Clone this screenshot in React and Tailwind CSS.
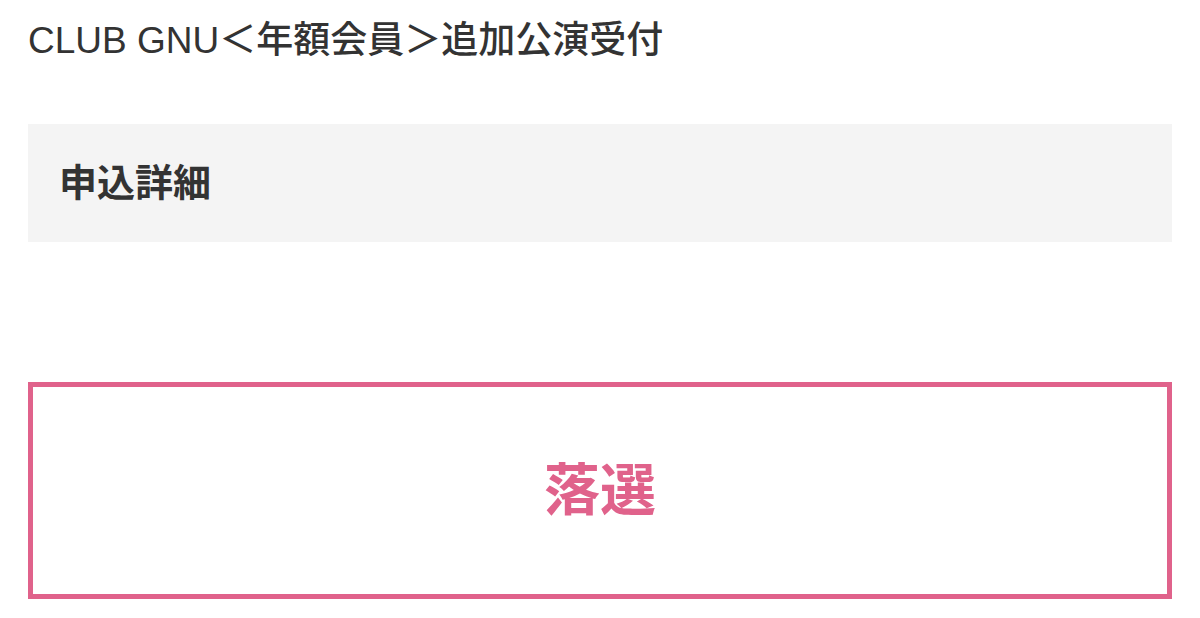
import React from "react";

const font = { fontFamily: '"Liberation Sans", "Noto Sans CJK JP", sans-serif' };

function ResultPanel() {
  return (
    <div className="mt-[140px] flex h-[217px] items-center justify-center border-[5px] border-[#e0628b]">
      <span className="text-[56px] font-bold leading-none text-[#e0628b]">落選</span>
    </div>
  );
}

export default function App() {
  return (
    <div className="min-h-screen bg-white px-[28px] text-[#333]" style={font}>
      <h1 className="pt-[19px] text-[37px] leading-[44px] font-medium">
        CLUB GNU＜年額会員＞追加公演受付
      </h1>

      <div className="mt-[61px] flex h-[118px] items-center bg-[#f4f4f4] px-[31px]">
        <h2 className="text-[38px] font-bold leading-none">申込詳細</h2>
      </div>

      <ResultPanel />
    </div>
  );
}
